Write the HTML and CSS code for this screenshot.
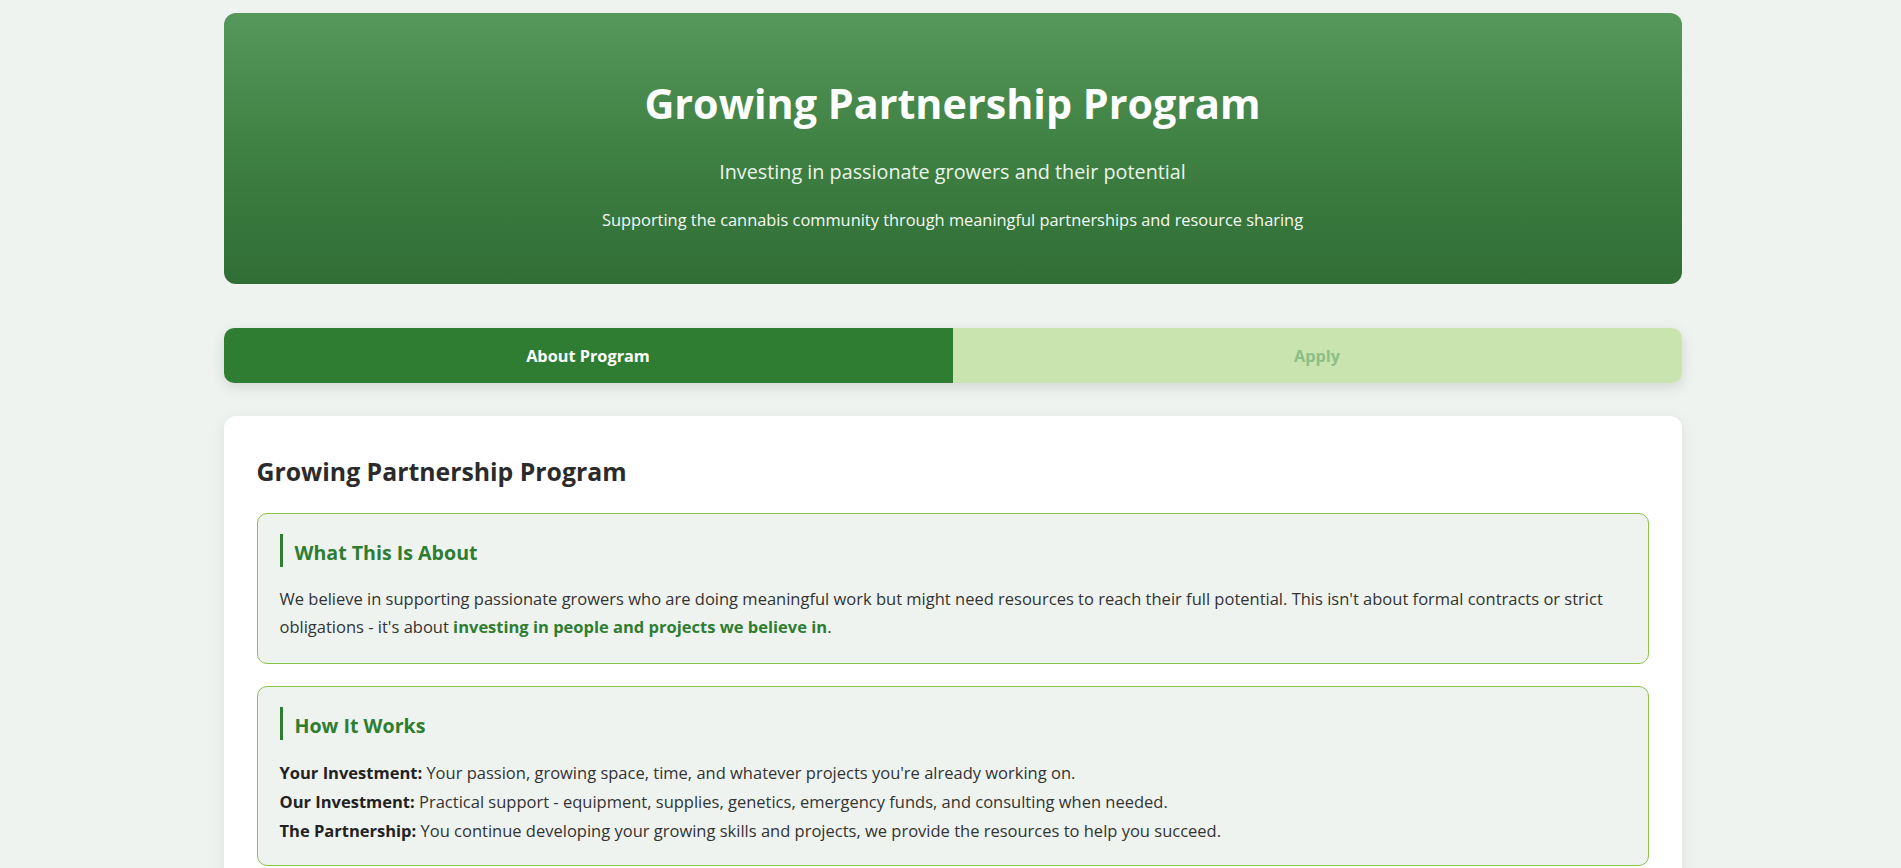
FILE: index.html
```html
<!DOCTYPE html>
<html lang="en">
<head>
<meta charset="utf-8">
<title>Growing Partnership Program</title>
<link rel="stylesheet" href="styles.css">
</head>
<body>
<div class="page">
  <header class="hero">
    <h1 class="hero-title">Growing Partnership Program</h1>
    <p class="hero-sub">Investing in passionate growers and their potential</p>
    <p class="hero-tag">Supporting the cannabis community through meaningful partnerships and resource sharing</p>
  </header>

  <nav class="tabs">
    <button class="tab tab-active">About Program</button>
    <button class="tab tab-idle">Apply</button>
  </nav>

  <main class="card">
    <h2 class="card-title">Growing Partnership Program</h2>

    <section class="box">
      <h3 class="box-title">What This Is About</h3>
      <p class="box-text">We believe in supporting passionate growers who are doing meaningful work but might need resources to reach their full potential. This isn't about formal contracts or strict obligations - it's about <strong class="accent">investing in people and projects we believe in</strong>.</p>
    </section>

    <section class="box box-works">
      <h3 class="box-title">How It Works</h3>
      <div class="box-lines">
        <div><strong>Your Investment:</strong> Your passion, growing space, time, and whatever projects you're already working on.</div>
        <div><strong>Our Investment:</strong> Practical support - equipment, supplies, genetics, emergency funds, and consulting when needed.</div>
        <div><strong>The Partnership:</strong> You continue developing your growing skills and projects, we provide the resources to help you succeed.</div>
      </div>
    </section>
  </main>
</div>
</body>
</html>
```

FILE: styles.css
```css
* { box-sizing: border-box; }

html, body {
  margin: 0;
  padding: 0;
}

body {
  background: #eef3ef;
  font-family: "Open Sans", "Noto Sans", sans-serif;
  color: #333;
}

.page {
  width: 1458px;
  margin: 0 auto;
  padding-top: 13px;
  position: relative;
  left: 2px;
}

.hero {
  background: linear-gradient(180deg, #56975b 0%, #3f8043 50%, #306e35 100%);
  border-radius: 12px;
  height: 271px;
  padding-top: 66px;
  text-align: center;
  color: #fff;
}

.hero-title {
  margin: 0;
  font-size: 41.3px;
  line-height: 48px;
  font-weight: 700;
}

.hero-sub {
  margin: 30px 0 0;
  font-size: 19.8px;
  line-height: 30px;
  color: #eaf5ea;
}

.hero-tag {
  margin: 21px 0 0;
  font-size: 16.4px;
  line-height: 24px;
  color: #f4f9f4;
}

.tabs {
  margin-top: 44px;
  display: flex;
  height: 55px;
  border-radius: 10px;
  overflow: hidden;
  box-shadow: 0 4px 14px rgba(0, 0, 0, 0.12);
}

.tab {
  flex: 1;
  border: 0;
  margin: 0;
  font-family: inherit;
  font-size: 16.3px;
  font-weight: 700;
  cursor: pointer;
}

.tab-active {
  background: #2e7d32;
  color: #fff;
}

.tab-idle {
  background: #c9e4ae;
  color: #8cbf86;
}

.card {
  margin-top: 33px;
  background: #fff;
  border-radius: 12px;
  padding: 33px 33px 40px;
  box-shadow: 0 4px 16px rgba(0, 0, 0, 0.08);
}

.card-title {
  margin: 0 0 20px;
  font-size: 24.8px;
  line-height: 44px;
  font-weight: 700;
  color: #2b2b2b;
}

.box {
  background: #eef3ef;
  border: 1px solid #8bc34a;
  border-radius: 10px;
  padding: 20px 22px 22px 22px;
  margin-bottom: 22px;
}

.box-works {
  padding-bottom: 20px;
}

.box-title {
  margin: 0 0 18px;
  border-left: 3px solid #2e7d32;
  padding: 5px 0 0 12px;
  font-size: 19.6px;
  line-height: 28px;
  font-weight: 700;
  color: #2e7d32;
}

.box-text {
  margin: 0;
  font-size: 16.5px;
  line-height: 28px;
}

.box-lines {
  font-size: 16.5px;
  line-height: 29px;
}

.box-lines strong {
  color: #222;
}

.accent {
  color: #2e7d32;
}
```
